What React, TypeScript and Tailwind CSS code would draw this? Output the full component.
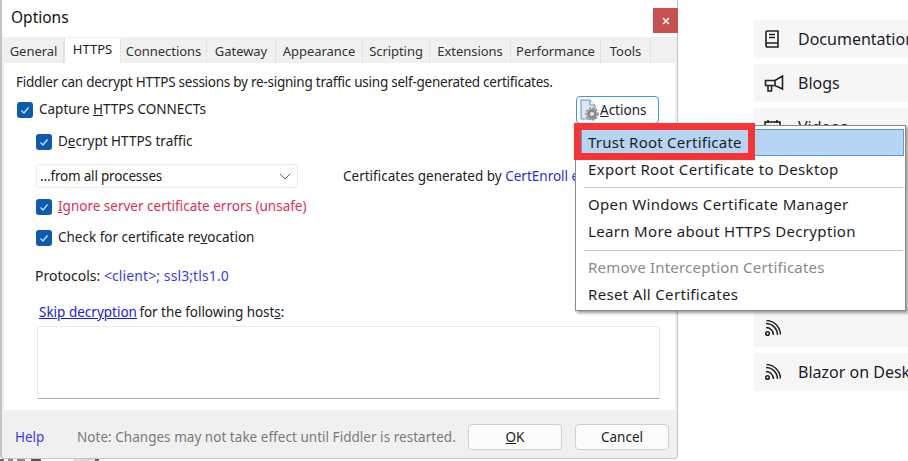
import React from "react";

function Check() {
  return (
    <span className="w-4 h-4 shrink-0 rounded-[3px] bg-[#0b5cb0] flex items-center justify-center">
      <svg width="10" height="10" viewBox="0 0 10 10" fill="none" stroke="#cfe2f5" strokeWidth="1.2"><path d="M1.5 5.5 L4 8 L8.5 2.5" /></svg>
    </span>
  );
}

function Tab({ w, label, active }: { w: string; label: string; active?: boolean }) {
  return active ? (
    <div className={`${w} h-[25px] bg-white border-x border-[#e4e4e4] flex items-center justify-center text-[13px] text-[#222] pb-[2px]`}>{label}</div>
  ) : (
    <div className={`${w} h-[22px] bg-[#f0f0f0] border-r border-[#e2e2e2] flex items-center justify-center text-[13px] tracking-[-0.05px] text-[#333]`}>{label}</div>
  );
}

function Row({ icon, label }: { icon: React.ReactNode; label?: string }) {
  return (
    <div className="h-[38px] bg-[#f6f6f6] flex items-center pl-[10px] shrink-0">
      <span className="w-[34px] shrink-0 flex">{icon}</span>
      <span className="text-[16px] text-[#1c1c2c] whitespace-nowrap">{label}</span>
    </div>
  );
}

const Rss = (
  <svg width="17" height="17" viewBox="0 0 17 17" fill="none" stroke="#222" strokeWidth="1.5">
    <circle cx="3.5" cy="13.5" r="1.8" />
    <path d="M2 7.5a7.5 7.5 0 0 1 7.5 7.5M2 3.5A11.5 11.5 0 0 1 13.5 15M2.5 0.5a14.5 14.5 0 0 1 14 14" />
  </svg>
);

function MenuItem({ label, disabled }: { label: string; disabled?: boolean }) {
  return (
    <div className={`h-[27px] flex items-center pl-[12px] text-[15px] ${disabled ? "tracking-[0.2px] text-[#8a8a8a]" : "tracking-[0.33px] text-[#1e1e1e]"}`}>{label}</div>
  );
}

export default function App() {
  return (
    <div className="relative w-[908px] h-[461px] bg-white overflow-hidden flex font-['Noto_Sans',sans-serif]">
      {/* Dialog */}
      <div className="relative w-[678px] h-[459px] shrink-0 bg-[#f0f0f0] border-l-2 border-b border-r border-[#c4c4c4] rounded-b-[4px] flex flex-col">
        <div className="h-[37px] bg-white flex justify-between pl-[9px] pt-[8px] shrink-0">
          <span className="text-[15.5px] leading-[18px] text-[#111]">Options</span>
          <span className="w-[25px] h-[25px] bg-[#c75050] flex items-center justify-center mr-[-1px]">
            <svg width="8" height="8" viewBox="0 0 8 8" stroke="#fff" strokeWidth="1.6"><path d="M1 1L7 7M7 1L1 7" /></svg>
          </span>
        </div>
        <div className="h-[26px] flex items-end pl-[2px] shrink-0 ">
          <Tab w="w-[60px]" label="General" />
          <Tab w="w-[57px]" label="HTTPS" active />
          <Tab w="w-[86px]" label="Connections" />
          <Tab w="w-[69px]" label="Gateway" />
          <Tab w="w-[87px]" label="Appearance" />
          <Tab w="w-[67px]" label="Scripting" />
          <Tab w="w-[81px]" label="Extensions" />
          <Tab w="w-[90px]" label="Performance" />
          <Tab w="w-[50px]" label="Tools" />
        </div>
        <div className="h-[347px] mx-[2px] bg-white shrink-0 flex flex-col pl-[12px] pt-[10px] text-[13.5px] text-[#222] relative">
          <div className="h-[19px] leading-[19px] whitespace-nowrap tracking-[-0.25px]">Fiddler can decrypt HTTPS sessions by re-signing traffic using self-generated certificates.</div>
          <div className="flex items-center gap-[6px] h-[16px] mt-[10px] ml-[1px] whitespace-nowrap">
            <Check />
            <span className="-mt-[1px]">Capture <u>H</u>TTPS CONNECTs</span>
          </div>
          <div className="flex items-center gap-[6px] h-[16px] mt-[16px] ml-[20px] whitespace-nowrap">
            <Check />
            <span className="-mt-[1px]">D<u>e</u>crypt HTTPS traffic</span>
          </div>
          <div className="flex items-center mt-[14px] ml-[20px] whitespace-nowrap">
            <div className="w-[262px] h-[24px] pt-[1px] bg-white border border-[#ececec] rounded-[3px] flex items-center justify-between pl-[3px] pr-[6px]">
              <span className="tracking-[-0.2px]">…from all processes</span>
              <svg width="12" height="7" viewBox="0 0 12 7" fill="none" stroke="#666" strokeWidth="1"><path d="M1 1l5 5 5-5" /></svg>
            </div>
            <span className="ml-[45px] pt-[1px] text-[#222]">Certificates generated by <span className="text-[#2b2bd6]">CertEnroll engine</span></span>
          </div>
          <div className="flex items-center gap-[6px] h-[16px] mt-[11px] ml-[20px] whitespace-nowrap">
            <Check />
            <span className="-mt-[1px] text-[#dc2f57]"><u>I</u>gnore server certificate errors (unsafe)</span>
          </div>
          <div className="flex items-center gap-[6px] h-[16px] mt-[15px] ml-[20px] whitespace-nowrap">
            <Check />
            <span className="-mt-[1px]">Check for certificate re<u>v</u>ocation</span>
          </div>
          <div className="h-[19px] leading-[19px] mt-[20px] ml-[19px] whitespace-nowrap text-[14px]">
            Protocols: <span className="text-[#3b3bf0] tracking-[0.1px]">&lt;client&gt;; ssl3;tls1.0</span>
          </div>
          <div className="h-[19px] leading-[19px] mt-[18px] ml-[23px] whitespace-nowrap">
            <span className="text-[#1a1ae0] underline">Skip decryption</span><span className="tracking-[-0.05px] ml-[-1px]"> for the following host<u>s</u>:</span>
          </div>
          <div className="w-[623px] h-[73px] ml-[21px] mt-[4px] bg-white border border-[#eaeaea] border-b-[#aaa] rounded-[2px]" />
          {/* Actions button */}
          <div className="absolute left-[572px] top-[33px] w-[83px] h-[28px] bg-white border border-[#3d97dc] rounded-[4px] flex items-center pl-[2px] gap-[1px]">
            <svg width="20" height="22" viewBox="0 0 20 22" fill="none">
              <path d="M2 1h9l5 5v14H2z" fill="#dbe8f4" stroke="#6e8fb0" />
              <path d="M11 1v5h5" fill="#fff" stroke="#6e8fb0" />
              <circle cx="13" cy="15" r="5" fill="#8a8a8a" />
              <circle cx="13" cy="15" r="6" fill="none" stroke="#8a8a8a" strokeWidth="1.5" strokeDasharray="2 1.5" />
              <circle cx="13" cy="15" r="2" fill="#e6e6e6" />
            </svg>
            <span className="text-[#222]"><u>A</u>ctions</span>
          </div>
        </div>
        <div className="flex-1 flex items-center pl-[13px] pr-[8px] pt-[6px] text-[13.5px] whitespace-nowrap">
          <span className="text-[#3b3bf0] w-[62px]">Help</span>
          <span className="text-[#7a7a7a] tracking-[0.03px]">Note: Changes may not take effect until Fiddler is restarted.</span>
          <div className="ml-auto flex gap-[13px]">
            <div className="w-[94px] h-[26px] bg-[#fbfbfb] border border-[#cfcfcf] rounded-[4px] flex items-center justify-center text-[#222]"><span><u>O</u>K</span></div>
            <div className="w-[94px] h-[26px] bg-[#fbfbfb] border border-[#cfcfcf] rounded-[4px] flex items-center justify-center text-[#222]">Cancel</div>
          </div>
        </div>
      </div>

      {/* Sidebar list behind */}
      <div className="ml-[76px] flex-1 flex flex-col pt-[20px] gap-[6px] overflow-hidden">
        <Row label="Documentation" icon={
          <svg width="16" height="18" viewBox="0 0 16 18" fill="none" stroke="#222" strokeWidth="1.6"><path d="M2 15V2.5C2 1.6 2.6 1 3.5 1H14v12H3.5C2.6 13 2 13.7 2 15.2S2.6 17 3.5 17H14v-4" /><path d="M5 4.5h6M5 7.5h6" /></svg>
        } />
        <Row label="Blogs" icon={
          <svg width="20" height="17" viewBox="0 0 20 17" fill="none" stroke="#222" strokeWidth="1.6"><path d="M18.5 1v13L11 10.5H1.5v-5H11zM11 5.5v5M4 10.5V16h3.5v-5.5" /></svg>
        } />
        <Row label="Videos" icon={
          <svg width="17" height="17" viewBox="0 0 17 17" fill="none" stroke="#222" strokeWidth="1.6"><rect x="1" y="3" width="15" height="11" /><path d="M4 1v3M13 1v3" /></svg>
        } />
        <Row label="Webinars" icon={Rss} />
        <div className="h-[107px] shrink-0" />
        <Row label="" icon={Rss} />
        <Row label="Blazor on Desktop" icon={Rss} />
      </div>

      {/* Popup menu */}
      <div className="absolute left-[575px] top-[125px] w-[331px] h-[186px] bg-white border border-[#8a8a8a] shadow-[2px_2px_3px_rgba(0,0,0,0.4)] flex flex-col pt-[3px]">
        <div className="h-[27px] ml-[5px] mr-[1px] bg-[#b5d5f2] border border-[#5a9bd5] flex items-center pl-[6px] text-[15px] tracking-[0.25px] text-[#1e1e1e]">Trust Root Certificate</div>
        <MenuItem label="Export Root Certificate to Desktop" />
        <div className="h-[1px] bg-[#c8c8c8] ml-[8px] mr-[2px] mt-[4px] mb-[3px]" />
        <MenuItem label="Open Windows Certificate Manager" />
        <MenuItem label="Learn More about HTTPS Decryption" />
        <div className="h-[1px] bg-[#c8c8c8] ml-[8px] mr-[2px] mt-[5px] mb-[3px]" />
        <MenuItem label="Remove Interception Certificates" disabled />
        <MenuItem label="Reset All Certificates" />
      </div>

      {/* Red annotation box */}
      <div className="absolute left-[574px] top-[123px] w-[181px] h-[37px] border-[7px] border-[#f93434]" />

      {/* Sliver of the desktop below the dialog */}
      <div className="absolute left-0 bottom-0 h-[2px] w-[100px] flex items-end">
        <span className="w-[4px] h-[2px] bg-[#6b6b6b]" />
        <span className="w-[5px] h-[2px] ml-[4px] bg-[#8a8a8a]" />
        <span className="w-[8px] h-[2px] ml-[4px] bg-[#8a8a8a]" />
        <span className="w-[10px] h-[2px] ml-[6px] bg-[#555]" />
        <span className="w-[22px] h-[2px] ml-[32px] bg-[#dcdcdc]" />
        <span className="w-[4px] h-[2px] bg-[#666]" />
      </div>
    </div>
  );
}
